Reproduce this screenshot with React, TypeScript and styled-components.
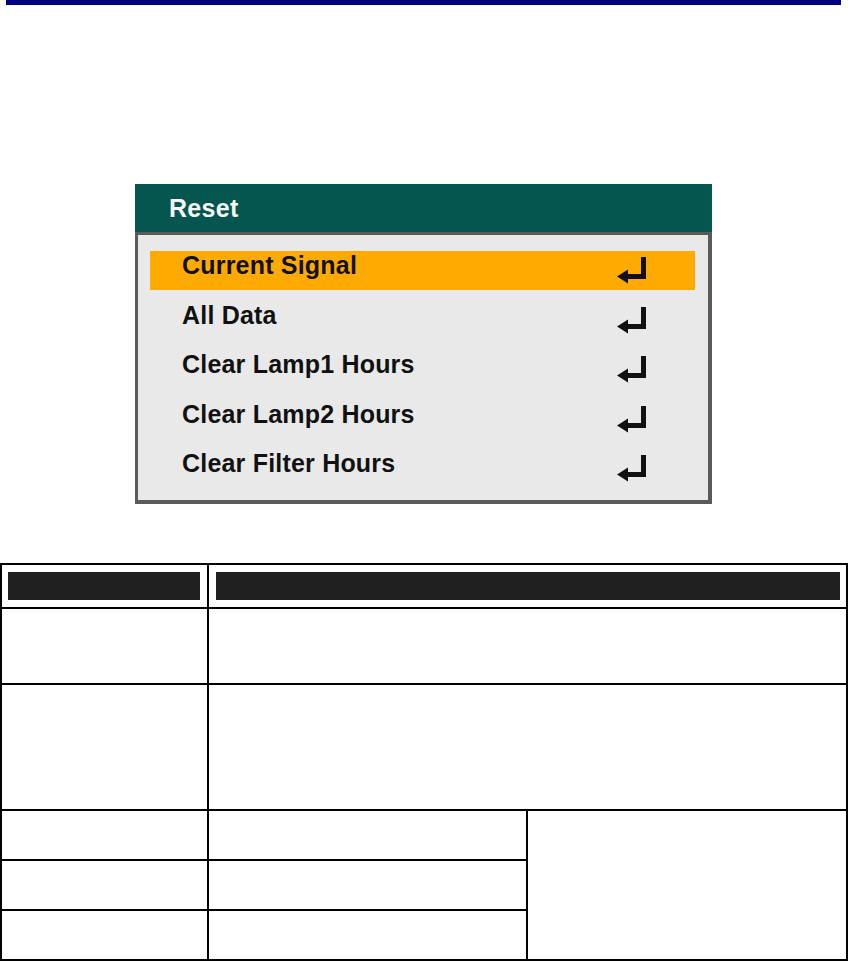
import React from "react";
import styled, { createGlobalStyle } from "styled-components";

const Global = createGlobalStyle`
  html, body {
    margin: 0;
    padding: 0;
    background: #ffffff;
  }
  body {
    font-family: "Liberation Sans", Arial, sans-serif;
    width: 848px;
    overflow: hidden;
  }
`;

const Page = styled.div`
  display: flex;
  flex-direction: column;
  width: 848px;
`;

const TopRule = styled.div`
  height: 5px;
  margin: 0 7px 0 6px;
  background: #000080;
`;

const Panel = styled.section`
  margin: 179px 0 0 135px;
  width: 577px;
  height: 320px;
  display: flex;
  flex-direction: column;
`;

const PanelHeader = styled.div`
  height: 48px;
  background: #04564f;
  color: #f6f6f6;
  font-weight: 700;
  font-size: 25px;
  line-height: 48px;
  letter-spacing: 0.3px;
  padding-left: 34px;
`;

const PanelBody = styled.div`
  flex: 1;
  background: #e9e9e9;
  border: 3px solid #5a5a5a;
  border-right-width: 4px;
  border-bottom-width: 4px;
  padding: 16px 13px 0 12px;
  display: flex;
  flex-direction: column;
  gap: 10.5px;
`;

const Row = styled.div<{ $active?: boolean }>`
  height: 39px;
  box-sizing: border-box;
  display: flex;
  justify-content: space-between;
  align-items: flex-start;
  padding: 0 47px 10px 32px;
  background: ${(p) => (p.$active ? "#ffaa00" : "transparent")};
  color: #111;
  font-weight: 700;
  font-size: 25px;
  line-height: 29px;
  letter-spacing: 0.2px;
`;

const EnterIcon = styled.svg`
  width: 33px;
  height: 32px;
  margin-top: 4px;
  flex: none;
`;

const Enter = () => (
  <EnterIcon viewBox="0 0 33 32">
    <rect x="26" y="2" width="5" height="22" fill="#111" />
    <rect x="10" y="19" width="21" height="5" fill="#111" />
    <polygon points="2,21.5 13,14.5 13,28.5" fill="#111" />
  </EnterIcon>
);

const Grid = styled.div`
  margin-top: 59px;
  width: 848px;
  box-sizing: border-box;
  display: grid;
  grid-template-columns: 207px 319px 1fr;
  grid-template-rows: 44px 76px 126px 50px 50px 50px;
  border-top: 2px solid #000;
  border-left: 2px solid #000;
`;

const Cell = styled.div<{ $span?: number; $rows?: number; $head?: boolean }>`
  box-sizing: border-box;
  border-right: 2px solid #000;
  border-bottom: 2px solid #000;
  grid-column: span ${(p) => p.$span ?? 1};
  grid-row: span ${(p) => p.$rows ?? 1};
  padding: ${(p) => (p.$head ? "7px 7px 7px 6px" : "0")};
  display: flex;
`;

const HeadBar = styled.div`
  flex: 1;
  height: 28px;
  background: #202020;
`;

const items = [
  "Current Signal",
  "All Data",
  "Clear Lamp1 Hours",
  "Clear Lamp2 Hours",
  "Clear Filter Hours",
];

export default function App() {
  return (
    <Page>
      <Global />
      <TopRule />
      <Panel>
        <PanelHeader>Reset</PanelHeader>
        <PanelBody>
          {items.map((t, i) => (
            <Row key={t} $active={i === 0}>
              <span>{t}</span>
              <Enter />
            </Row>
          ))}
        </PanelBody>
      </Panel>
      <Grid>
        <Cell $head>
          <HeadBar />
        </Cell>
        <Cell $head $span={2} style={{ paddingLeft: 7, paddingRight: 6 }}>
          <HeadBar />
        </Cell>
        <Cell />
        <Cell $span={2} />
        <Cell />
        <Cell $span={2} />
        <Cell />
        <Cell />
        <Cell $rows={3} />
        <Cell />
        <Cell />
        <Cell />
        <Cell />
      </Grid>
    </Page>
  );
}
